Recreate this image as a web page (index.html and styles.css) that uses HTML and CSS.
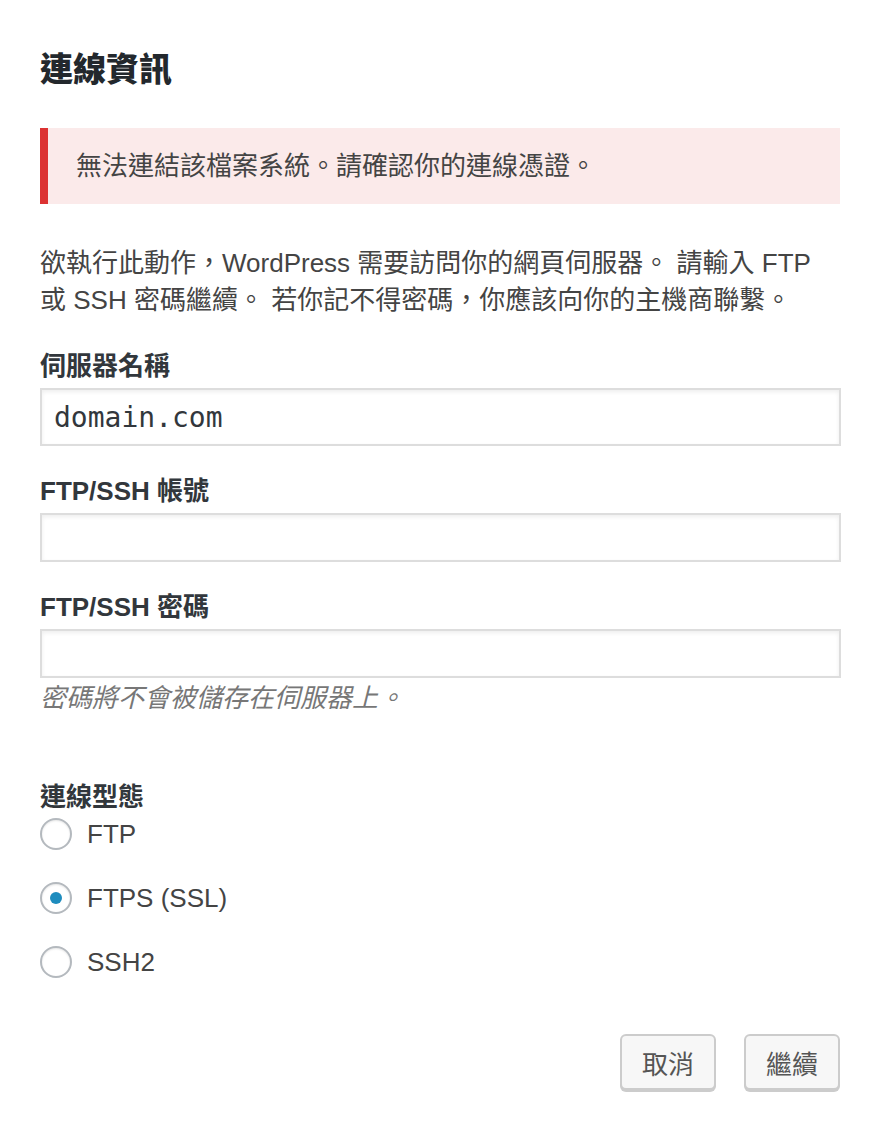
FILE: index.html
```html
<!DOCTYPE html>
<html lang="zh-Hant">
<head>
    <meta charset="UTF-8">
    <meta name="viewport" content="width=device-width, initial-scale=1.0">
    <title>連線資訊</title>
    <link rel="stylesheet" href="styles.css">
</head>
<body>
    <div class="wrap">
        <h2 class="title">連線資訊</h2>
        <div class="notice">無法連結該檔案系統。請確認你的連線憑證。</div>
        <p class="intro">欲執行此動作，WordPress 需要訪問你的網頁伺服器。 請輸入 FTP<br>或 SSH 密碼繼續。 若你記不得密碼，你應該向你的主機商聯繫。</p>

        <label class="field-label" for="hostname">伺服器名稱</label>
        <input class="field field-big" type="text" id="hostname" value="domain.com">

        <label class="field-label" for="username">FTP/SSH 帳號</label>
        <input class="field" type="text" id="username">

        <label class="field-label" for="password">FTP/SSH 密碼</label>
        <input class="field" type="password" id="password">
        <p class="hint">密碼將不會被儲存在伺服器上。</p>

        <div class="field-label type-label">連線型態</div>
        <div class="radios">
            <label class="radio-row"><span class="radio"></span>FTP</label>
            <label class="radio-row"><span class="radio checked"></span>FTPS (SSL)</label>
            <label class="radio-row"><span class="radio"></span>SSH2</label>
        </div>

        <div class="actions">
            <button class="btn">取消</button>
            <button class="btn">繼續</button>
        </div>
    </div>
</body>
</html>
```

FILE: styles.css
```css
body {
    margin: 0;
    background: #fff;
    color: #444;
    font-family: "Liberation Sans", "Noto Sans CJK TC", sans-serif;
    font-size: 26px;
}
.wrap {
    width: 800px;
    padding: 50px 40px 40px;
    display: flex;
    flex-direction: column;
}
.title {
    margin: 0;
    font-size: 33px;
    line-height: 40px;
    font-weight: 900;
    color: #23282d;
}
.notice {
    margin-top: 38px;
    background: #fbeaea;
    border-left: 8px solid #dc3232;
    padding: 20px 28px;
    line-height: 36px;
}
.intro {
    margin: 41px 0 2px;
    line-height: 37px;
}
.field-label {
    display: block;
    margin-top: 27px;
    line-height: 36px;
    font-weight: bold;
    color: #32373c;
}
.field {
    box-sizing: border-box;
    margin-top: 4px;
    width: 801px;
    height: 49px;
    border: 2px solid #ddd;
    box-shadow: inset 0 2px 4px rgba(0, 0, 0, 0.07);
    background: #fff;
    padding: 0 12px;
    font-size: 26px;
    color: #32373c;
    outline: none;
}
.field-big {
    height: 58px;
    font-family: "DejaVu Sans Mono", monospace;
    font-size: 28px;
}
.hint {
    margin: 2px 0 0;
    line-height: 36px;
    font-style: italic;
    color: #777;
}
.type-label {
    margin-top: 63px;
}
.radios {
    display: flex;
    flex-direction: column;
    gap: 26px;
}
.radio-row {
    display: flex;
    align-items: center;
    gap: 15px;
    height: 38px;
}
.radio {
    box-sizing: border-box;
    width: 32px;
    height: 32px;
    border: 2px solid #b4b9be;
    border-radius: 50%;
    background: #fff;
    box-shadow: inset 0 1px 2px rgba(0, 0, 0, 0.1);
    display: flex;
    align-items: center;
    justify-content: center;
}
.radio.checked::before {
    content: '';
    width: 12px;
    height: 12px;
    border-radius: 50%;
    background: #1e8cbe;
}
.actions {
    margin-top: 53px;
    display: flex;
    justify-content: flex-end;
    gap: 28px;
}
.btn {
    width: 96px;
    height: 56px;
    border: 2px solid #ccc;
    border-radius: 6px;
    background: #f7f7f7;
    box-shadow: 0 2px 0 #ccc;
    color: #555;
    font-family: "Liberation Sans", "Noto Sans CJK TC", sans-serif;
    font-size: 26px;
    padding: 0;
    cursor: pointer;
}
```
